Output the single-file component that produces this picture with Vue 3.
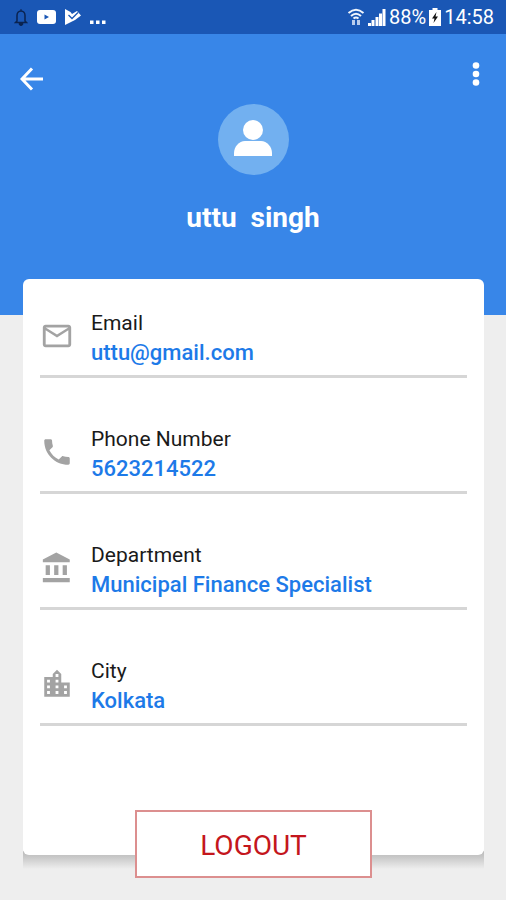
<script setup>
const fields = [
  { id: 'email', label: 'Email', value: 'uttu@gmail.com' },
  { id: 'phone', label: 'Phone Number', value: '5623214522' },
  { id: 'department', label: 'Department', value: 'Municipal Finance Specialist' },
  { id: 'city', label: 'City', value: 'Kolkata' },
]

const icons = {
  email: 'M20 4H4c-1.1 0-2 .9-2 2v12c0 1.1.9 2 2 2h16c1.1 0 2-.9 2-2V6c0-1.1-.9-2-2-2zm0 14H4V8l8 5 8-5v10zm-8-7L4 6h16l-8 5z',
  phone: 'M6.62 10.79c1.44 2.83 3.76 5.14 6.59 6.59l2.2-2.2c.27-.27.67-.36 1.02-.24 1.12.37 2.33.57 3.57.57.55 0 1 .45 1 1V20c0 .55-.45 1-1 1C10.61 21 3 13.39 3 4c0-.55.45-1 1-1h3.5c.55 0 1 .45 1 1 0 1.25.2 2.45.57 3.57.11.35.03.74-.25 1.02l-2.2 2.2z',
  department: 'M4 10v7h3v-7H4zm6 0v7h3v-7h-3zM2 22h19v-3H2v3zm14-12v7h3v-7h-3zm-4.5-9L2 6v2h19V6l-9.500-5z',
  city: 'M15 11V5l-3-3-3 3v2H3v14h18V11h-6zm-8 8H5v-2h2v2zm0-4H5v-2h2v2zm0-4H5V9h2v2zm6 8h-2v-2h2v2zm0-4h-2v-2h2v2zm0-4h-2V9h2v2zm0-4h-2V5h2v2zm6 12h-2v-2h2v2zm0-4h-2v-2h2v2z',
}
</script>

<template>
  <div class="screen">
    <div class="status">
      <div class="status-group left">
        <svg class="bell" viewBox="0 0 14 18" width="14" height="18" aria-hidden="true">
          <path d="M3 13V7.500C3 5 4.600 3 7 3s4 2 4 4.500V13l1.500 1.500h-11z" fill="none" stroke="currentColor" stroke-width="1.500" />
          <path d="M7 1v2M5 15.500a2 2 0 0 0 4 0z" fill="currentColor" stroke="currentColor" />
        </svg>
        <svg viewBox="0 0 20 16" width="20" height="16" aria-hidden="true">
          <rect x="1" y="1" width="19" height="14" rx="3" fill="#fff" />
          <path d="M8.500 5.500v5l4.500-2.500z" fill="#1a57b5" />
        </svg>
        <svg viewBox="0 0 18 18" width="18" height="18" aria-hidden="true">
          <path d="M1 1L6.500 4l1.500 2 5-3L17 7.500 11 12l-10 5z" fill="#fff" />
          <path d="M4.500 7L8 10.500 14 4.500" fill="none" stroke="#1a57b5" stroke-width="1.300" />
        </svg>
        <svg viewBox="0 0 16 16" width="16" height="16" aria-hidden="true">
          <path d="M0 11.500h3.500V15H0zM6 11.500h3.500V15H6zM12 11.500h3.500V15H12z" fill="#fff" />
        </svg>
      </div>
      <div class="status-group right">
        <svg viewBox="0 0 18 18" width="18" height="18" aria-hidden="true">
          <g fill="none" stroke="#f0f5fc" stroke-width="2">
            <path d="M1.500 5Q9-1.500 16.500 5" />
            <path d="M4 8Q9 3.500 14 8" />
            <path d="M6.500 10.500Q9 8.500 11.500 10.500" />
          </g>
          <path d="M5 12h3v5H5zM10 12h3v5h-3z" fill="#b9cdee" />
        </svg>
        <svg viewBox="0 0 18 17" width="18" height="17" aria-hidden="true">
          <path d="M0 17v-3h3v3zM3.500 17v-6h3v6zM7.500 17V8h3v9zM11 17V4.500h3V17zM14.500 17V0h3v17z" fill="#fff" />
        </svg>
        <span class="status-text">88%</span>
        <svg viewBox="0 0 12 18" width="12" height="18" aria-hidden="true">
          <path d="M3.500 0h5v2H12v16H0V2h3.500z" fill="#fff" />
          <path d="M7.500 4L3 10.500h2.500L4.500 15 9 8.500H6.500z" fill="#111" />
        </svg>
        <span class="status-text">14:58</span>
      </div>
    </div>

    <header class="hero">
      <nav class="toolbar">
        <button class="icon-button" type="button" aria-label="Back">
          <svg viewBox="0 0 24 24" width="24" height="24">
            <path d="M12 1.500L2 12l10 10.500M2 12h21" fill="none" stroke="#fff" stroke-width="3" />
          </svg>
        </button>
        <button class="icon-button more" type="button" aria-label="More options">
          <svg viewBox="0 0 8 26" width="8" height="26">
            <g fill="#fff">
              <circle cx="4" cy="4.500" r="3.300" />
              <circle cx="4" cy="13" r="3.300" />
              <circle cx="4" cy="21.500" r="3.300" />
            </g>
          </svg>
        </button>
      </nav>
      <div class="avatar">
        <svg viewBox="0 0 38 36" width="38" height="36" aria-hidden="true">
          <circle cx="19" cy="10" r="10" fill="#fff" />
          <path d="M0 36v-3c0-6 5-12 11-12h16c6 0 11 6 11 12v3z" fill="#fff" />
        </svg>
      </div>
      <h1 class="name">uttu&nbsp; singh</h1>
    </header>

    <main class="content">
      <section class="card">
        <dl class="fields">
          <div v-for="field in fields" :key="field.id" class="field">
            <svg class="field-icon" viewBox="0 0 24 24" width="34" height="34" aria-hidden="true">
              <path :d="icons[field.id]" />
            </svg>
            <div class="field-text">
              <dt>{{ field.label }}</dt>
              <dd>{{ field.value }}</dd>
            </div>
          </div>
        </dl>
      </section>
      <button class="logout" type="button">LOGOUT</button>
    </main>
  </div>
</template>

<style>
body {
  margin: 0;
  background: #eee;
}
</style>

<style scoped>
.screen {
  min-height: 100vh;
  background: #eee;
  font-family: Roboto, "Liberation Sans", sans-serif;
}

.status {
  display: flex;
  align-items: center;
  justify-content: space-between;
  height: 34px;
  padding: 0 12px 0 14px;
  background: #1a57b5;
  color: #fff;
}

.status-group {
  display: flex;
  align-items: center;
}

.left {
  gap: 8px;
}

.right {
  gap: 3px;
}

.bell {
  color: #0a2350;
}

.status-text {
  font-size: 20px;
  line-height: 34px;
}

.hero {
  display: flex;
  flex-direction: column;
  align-items: center;
  box-sizing: border-box;
  height: 281px;
  background: #3886e8;
  color: #fff;
}

.toolbar {
  display: flex;
  align-items: flex-start;
  justify-content: space-between;
  align-self: stretch;
  box-sizing: border-box;
  height: 70px;
  padding: 24px 15px 0 17px;
}

.icon-button {
  display: grid;
  place-items: center;
  width: 30px;
  height: 42px;
  padding: 0;
  border: 0;
  background: none;
  cursor: pointer;
}

.more {
  height: 32px;
}

.avatar {
  display: grid;
  place-items: center;
  box-sizing: border-box;
  width: 71px;
  height: 71px;
  padding-bottom: 4px;
  border-radius: 50%;
  background: #72b0f0;
}

.name {
  margin: 25px 0 0;
  font-size: 28px;
  font-weight: 700;
  line-height: 36px;
}

.content {
  position: relative;
  z-index: 0;
  display: flex;
  flex-direction: column;
  align-items: center;
  margin-top: -36px;
  padding: 0 22px 22px 23px;
}

.card {
  position: relative;
  align-self: stretch;
  padding: 30px 17px 129px;
  border-radius: 6px;
  background: #fff;
}

.card::after {
  content: "";
  position: absolute;
  z-index: -1;
  right: 0;
  bottom: -14px;
  left: 0;
  height: 18px;
  background: linear-gradient(#bbb, #c6c6c6 30%, #eee);
}

.fields {
  display: flex;
  flex-direction: column;
  gap: 47px;
  margin: 0;
}

.field {
  display: flex;
  gap: 17px;
  padding-bottom: 8px;
  border-bottom: 3px solid #d6d6d6;
}

.field-icon {
  flex: none;
  margin-top: 10px;
  fill: #a3a3a3;
}

.field-text {
  font-size: 21px;
  line-height: 29px;
}

dt {
  color: #1a1a1a;
}

dd {
  margin: 0;
  color: #1d7ae8;
  font-size: 22px;
  font-weight: 500;
}

.logout {
  position: relative;
  width: 237px;
  height: 68px;
  margin-top: -45px;
  padding: 2px 0 0;
  border: 2px solid #dc8f8f;
  background: #fff;
  color: #c4161c;
  font-family: inherit;
  font-size: 28px;
  cursor: pointer;
}
</style>
